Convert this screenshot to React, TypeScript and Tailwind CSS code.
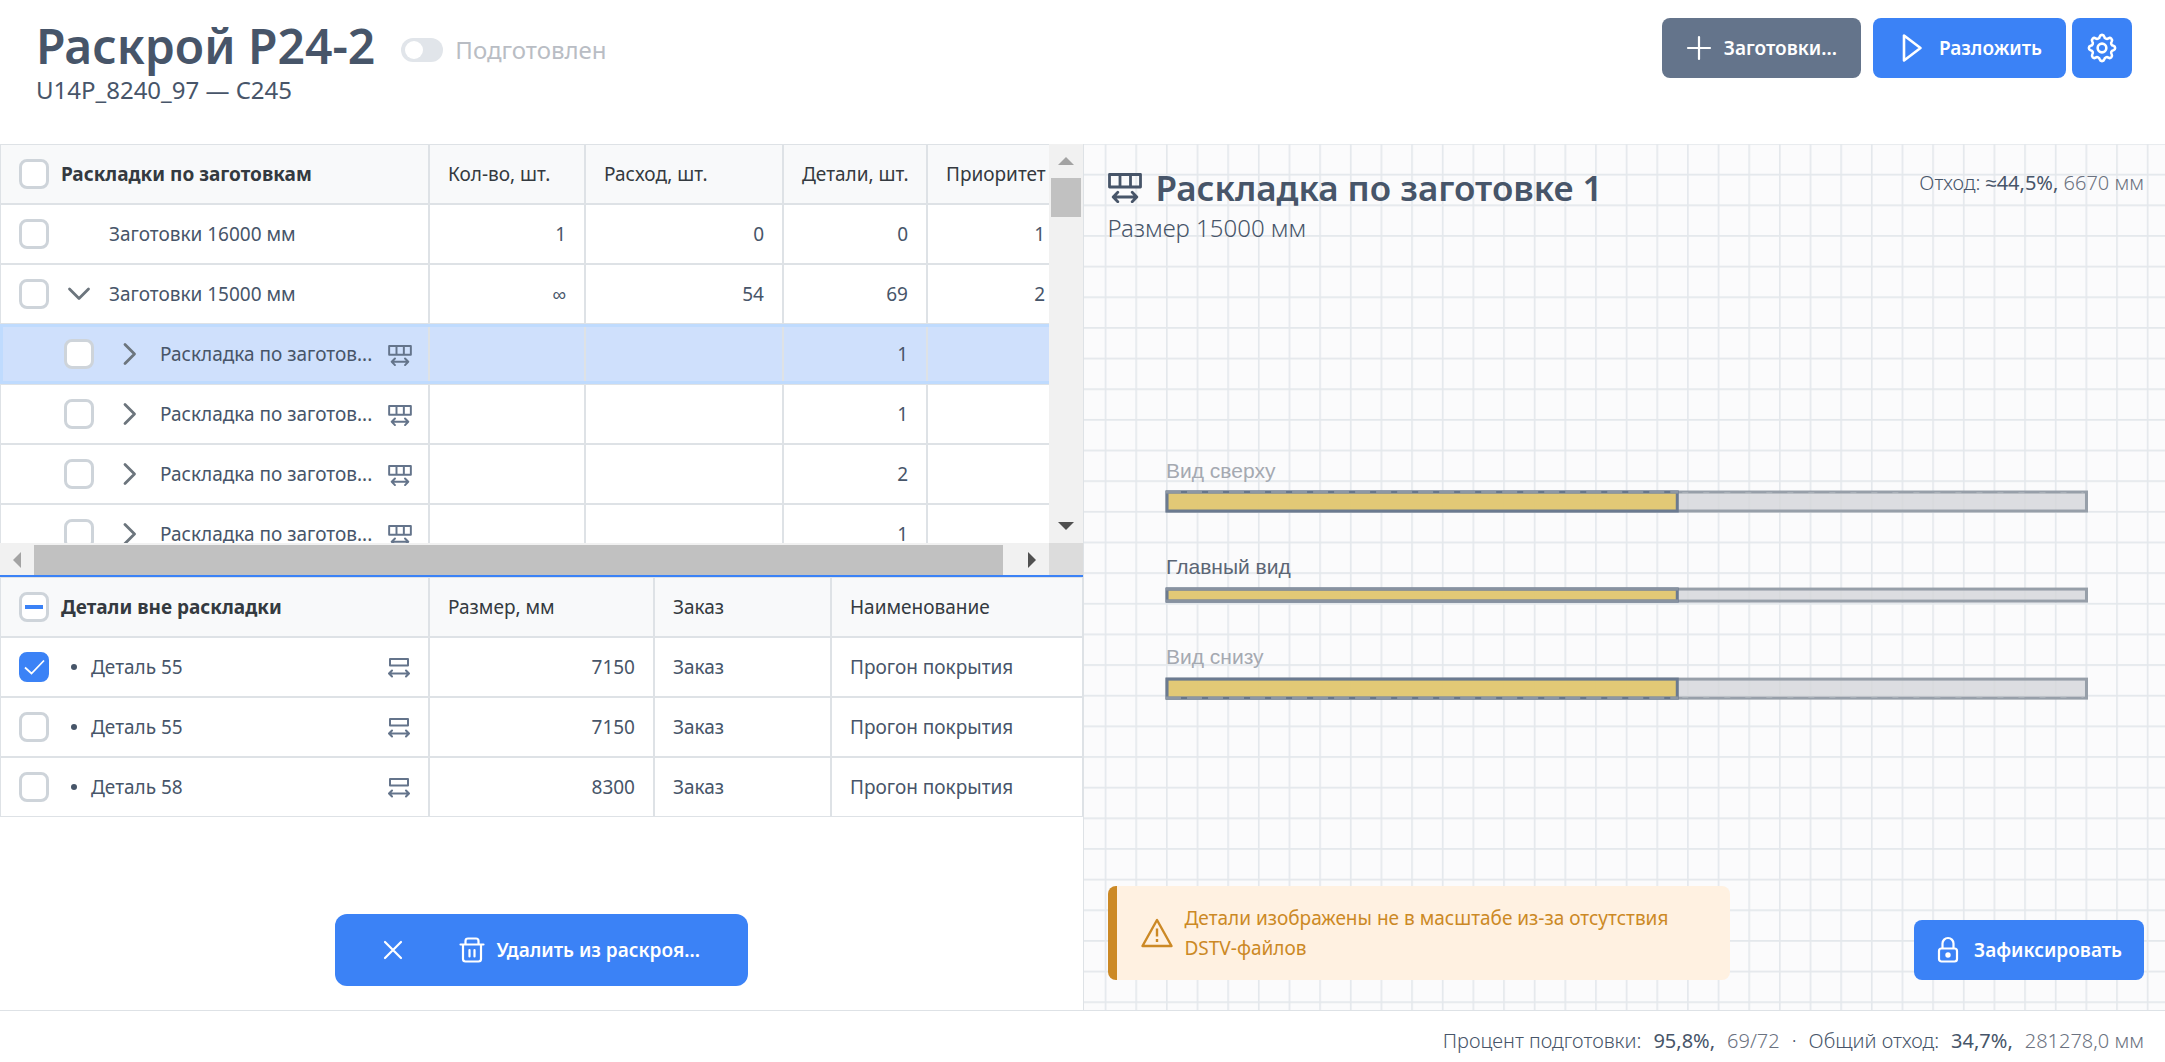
import { useState } from 'react';
import type { ReactNode } from 'react';
import clsx from 'clsx';

type StockRow = {
  id: string;
  name: string;
  child?: boolean;
  open?: boolean;
  selected?: boolean;
  count: string;
  usage: string;
  parts: string;
  priority: string;
};

const stockRows: StockRow[] = [
  { id: 's1', name: 'Заготовки 16000 мм', count: '1', usage: '0', parts: '0', priority: '1' },
  { id: 's2', name: 'Заготовки 15000 мм', open: true, count: '∞', usage: '54', parts: '69', priority: '2' },
  { id: 'l1', name: 'Раскладка по заготов...', child: true, selected: true, count: '', usage: '', parts: '1', priority: '' },
  { id: 'l2', name: 'Раскладка по заготов...', child: true, count: '', usage: '', parts: '1', priority: '' },
  { id: 'l3', name: 'Раскладка по заготов...', child: true, count: '', usage: '', parts: '2', priority: '' },
  { id: 'l4', name: 'Раскладка по заготов...', child: true, count: '', usage: '', parts: '1', priority: '' },
];

const partRows = [
  { id: 'p1', name: 'Деталь 55', size: '7150', order: 'Заказ', title: 'Прогон покрытия' },
  { id: 'p2', name: 'Деталь 55', size: '7150', order: 'Заказ', title: 'Прогон покрытия' },
  { id: 'p3', name: 'Деталь 58', size: '8300', order: 'Заказ', title: 'Прогон покрытия' },
];

const views = [
  { label: 'Вид сверху', baseline: 22, top: 36, height: 19, muted: true, dash: 'top' },
  { label: 'Главный вид', baseline: 118, top: 133, height: 12, muted: false, dash: 'none' },
  { label: 'Вид снизу', baseline: 208, top: 223, height: 19, muted: true, dash: 'bottom' },
];

// eight round teeth joined by shallow inward arcs
const gearPoint = (deg: number) => {
  const a = (deg * Math.PI) / 180;
  return `${(15 + 11.3 * Math.cos(a)).toFixed(2)} ${(15 + 11.3 * Math.sin(a)).toFixed(2)}`;
};
const gearPath =
  `M${gearPoint(-11.25)}` +
  Array.from({ length: 8 }, (_, i) => {
    const deg = i * 45;
    return `A2.3 2.3 0 0 1 ${gearPoint(deg + 11.25)}A2.5 2.5 0 0 0 ${gearPoint(deg + 33.75)}`;
  }).join('') +
  'Z';

function GearIcon({ className }: { className?: string }) {
  return (
    <svg viewBox="0.5 0.5 29 29" fill="none" stroke="currentColor" strokeWidth="2.500" strokeLinejoin="round" className={className} aria-hidden="true">
      <path d={gearPath} />
      <circle cx="15" cy="15" r="4.200" />
    </svg>
  );
}

function LayoutIcon({ className }: { className?: string }) {
  return (
    <svg viewBox="0 0 34 30" fill="none" stroke="currentColor" strokeWidth="2.800" strokeLinejoin="round" strokeLinecap="round" className={className} aria-hidden="true">
      <path d="M1.5 1.5h31v12.5h-31zM12 1.5V14M22.500 1.5V14" />
      <path d="M5.500 24h23M9.800 19.300L5.200 24l4.600 4.700M24.200 19.300l4.600 4.700-4.600 4.700" />
    </svg>
  );
}

function PartIcon({ className }: { className?: string }) {
  return (
    <svg viewBox="0 0 22 20" fill="none" stroke="currentColor" strokeWidth="2" strokeLinejoin="round" strokeLinecap="round" className={className} aria-hidden="true">
      <path d="M2 1h18v6.500H2z" />
      <path d="M1.500 15.500h19M4 12.500l-3 3 3 3M18 12.500l3 3-3 3" />
    </svg>
  );
}

function Check({
  label,
  checked,
  mixed,
  onChange,
}: {
  label: string;
  checked?: boolean;
  mixed?: boolean;
  onChange?: () => void;
}) {
  return (
    <label className="relative block h-[30px] w-[30px] shrink-0">
      <input
        type="checkbox"
        aria-label={label}
        checked={checked ?? false}
        onChange={onChange ?? (() => {})}
        className="block h-full w-full appearance-none rounded-lg border-3 border-[#ced4da] bg-white checked:border-[#3b82f6] checked:bg-[#3b82f6]"
      />
      {checked && (
        <svg viewBox="0 0 30 30" fill="none" stroke="white" strokeWidth="1.800" className="pointer-events-none absolute inset-0">
          <path d="M6 15.500l6.500 6L25 8.500" />
        </svg>
      )}
      {mixed && <span className="pointer-events-none absolute inset-x-1.5 top-[13px] h-1 bg-[#3b82f6]" />}
    </label>
  );
}

function HeadCell({ children, className }: { children: ReactNode; className?: string }) {
  return (
    <th className={clsx('h-[60px] border border-[#dee2e6] bg-[#f8f9fa] px-[18px] text-left font-normal text-[#343a40]', className)}>
      {children}
    </th>
  );
}

function Cell({ children, className }: { children?: ReactNode; className?: string }) {
  return <td className={clsx('h-[60px] border border-[#dee2e6] px-[18px]', className)}>{children}</td>;
}

function StockTable() {
  return (
    <table className="w-[1064px] table-fixed border-separate border-spacing-0">
      <colgroup>
        <col className="w-[429px]" />
        <col className="w-[156px]" />
        <col className="w-[198px]" />
        <col className="w-[144px]" />
        <col />
      </colgroup>
      <thead>
        <tr>
          <HeadCell>
            <div className="flex items-center gap-3">
              <Check label="Выбрать все раскладки" />
              <span className="font-bold">Раскладки по заготовкам</span>
            </div>
          </HeadCell>
          <HeadCell>Кол-во, шт.</HeadCell>
          <HeadCell>Расход, шт.</HeadCell>
          <HeadCell className="whitespace-nowrap">Детали, шт.</HeadCell>
          <HeadCell>Приоритет</HeadCell>
        </tr>
      </thead>
      <tbody>
        {stockRows.map((row) => (
          <tr key={row.id} className={clsx(row.selected && 'bg-[#cfe0fc] outline-3 -outline-offset-3 outline-[#bfdbfe]')}>
            <Cell className="pr-4">
              <div className={clsx('flex items-center', row.child && 'pl-[45px]')}>
                <Check label={row.name} />
                <span className={clsx('flex w-9 shrink-0 justify-center', row.child ? 'ml-[18px]' : 'ml-3')}>
                  {(row.child || row.open) && (
                    <button type="button" aria-label={row.open ? 'Свернуть' : 'Развернуть'} className="text-[#6c757d]">
                      <svg
                        viewBox="0 0 24 24"
                        fill="none"
                        stroke="currentColor"
                        strokeWidth="2.800"
                        strokeLinecap="round"
                        strokeLinejoin="round"
                        className={clsx('h-6 w-6', row.open && 'rotate-90')}
                      >
                        <path d="M7 2.500l9.500 9.500L7 21.500" />
                      </svg>
                    </button>
                  )}
                </span>
                <span className="ml-3 flex-1 whitespace-nowrap">{row.name}</span>
                {row.child && <LayoutIcon className="mt-0.5 h-[21px] w-6 shrink-0 text-[#64748b]" />}
              </div>
            </Cell>
            <Cell className="text-right">{row.count}</Cell>
            <Cell className="text-right">{row.usage}</Cell>
            <Cell className="text-right">{row.parts}</Cell>
            <Cell className="text-right">{row.priority}</Cell>
          </tr>
        ))}
      </tbody>
    </table>
  );
}

function PartsTable() {
  const [picked, setPicked] = useState<string[]>(['p1']);

  const toggle = (id: string) =>
    setPicked((prev) => (prev.includes(id) ? prev.filter((x) => x !== id) : [...prev, id]));

  return (
    <table className="w-full table-fixed border-separate border-spacing-0">
      <colgroup>
        <col className="w-[429px]" />
        <col className="w-[225px]" />
        <col className="w-[177px]" />
        <col />
      </colgroup>
      <thead>
        <tr>
          <HeadCell>
            <div className="flex items-center gap-3">
              <Check label="Выбрать все детали" mixed={picked.length > 0} />
              <span className="font-bold">Детали вне раскладки</span>
            </div>
          </HeadCell>
          <HeadCell>Размер, мм</HeadCell>
          <HeadCell>Заказ</HeadCell>
          <HeadCell>Наименование</HeadCell>
        </tr>
      </thead>
      <tbody>
        {partRows.map((row) => (
          <tr key={row.id}>
            <Cell>
              <div className="flex items-center">
                <Check label={row.name} checked={picked.includes(row.id)} onChange={() => toggle(row.id)} />
                <span className="ml-[22px] h-1.5 w-1.5 rounded-full bg-[#475569]" />
                <span className="ml-3.5 flex-1">{row.name}</span>
                <PartIcon className="mt-0.5 h-5 w-[22px] text-[#64748b]" />
              </div>
            </Cell>
            <Cell className="text-right">{row.size}</Cell>
            <Cell>{row.order}</Cell>
            <Cell>{row.title}</Cell>
          </tr>
        ))}
      </tbody>
    </table>
  );
}

function VerticalScroll() {
  return (
    <div className="flex w-[34px] shrink-0 flex-col items-center bg-[#f1f1f1]">
      <button type="button" aria-label="Вверх" className="flex h-[34px] w-full items-center justify-center text-[#a3a3a3]">
        <svg viewBox="0 0 16 8" className="h-2 w-4" fill="currentColor">
          <path d="M8 0l8 8H0z" />
        </svg>
      </button>
      <div className="h-[39px] w-[30px] bg-[#c1c1c1]" />
      <button type="button" aria-label="Вниз" className="mt-auto flex h-[34px] w-full items-center justify-center text-[#505050]">
        <svg viewBox="0 0 16 8" className="h-2 w-4" fill="currentColor">
          <path d="M0 0h16L8 8z" />
        </svg>
      </button>
    </div>
  );
}

function HorizontalScroll() {
  return (
    <div className="flex h-8 shrink-0">
      <div className="flex flex-1 bg-[#f1f1f1] pt-0.5">
        <button type="button" aria-label="Влево" className="flex w-[34px] items-center justify-center text-[#a3a3a3]">
          <svg viewBox="0 0 8 16" className="h-4 w-2" fill="currentColor">
            <path d="M8 0v16L0 8z" />
          </svg>
        </button>
        <div className="mr-3 flex-1 bg-[#c1c1c1]" />
        <button type="button" aria-label="Вправо" className="flex w-[34px] items-center justify-center text-[#505050]">
          <svg viewBox="0 0 8 16" className="h-4 w-2" fill="currentColor">
            <path d="M0 0l8 8-8 8z" />
          </svg>
        </button>
      </div>
      <div className="w-[34px] bg-[#dcdcdc]" />
    </div>
  );
}

function GridBackground() {
  return (
    <svg className="absolute inset-0 h-full w-full" aria-hidden="true">
      <defs>
        <pattern id="grid" x="20.700" y="-0.900" width="30.650" height="30.650" patternUnits="userSpaceOnUse">
          <path d="M0.800 0V30.650M0 0.800H30.650" stroke="#e4e8ec" strokeWidth="1.700" fill="none" />
        </pattern>
      </defs>
      <rect width="100%" height="100%" fill="url(#grid)" />
    </svg>
  );
}

function Drawing() {
  return (
    <svg viewBox="0 0 923 246" className="block h-auto w-full" role="img" aria-label="Виды раскладки">
      {views.map((view) => {
        const bottom = view.top + view.height;
        const dashY = view.dash === 'top' ? view.top : bottom;
        return (
          <g key={view.label}>
            <text
              x="1"
              y={view.baseline}
              fontSize="21"
              fontFamily="'Liberation Sans', Arial, sans-serif"
              fill={view.muted ? '#a5a9b1' : '#5c6675'}
            >
              {view.label}
            </text>
            <rect x="2" y={view.top} width="919" height={view.height} fill="#d4d6da" fillOpacity="0.8" stroke="#979fa9" strokeWidth="3" />
            <rect x="2" y={view.top} width="510" height={view.height} fill="#e2c76a" fillOpacity="0.9" stroke="#6b7a90" strokeWidth="3" />
            {view.dash === 'none' ? (
              <path d={`M1 ${view.top}H513M1 ${bottom}H513`} stroke="#8892a0" strokeWidth="3" />
            ) : (
              <>
                <path d={`M1 ${dashY}H513`} stroke="#8d97a3" strokeWidth="3" />
                <path d={`M16 ${dashY}H513`} stroke="#66758a" strokeWidth="2" strokeDasharray="6 15" />
                <path
                  d={`M517 ${dashY + (view.dash === 'top' ? 1 : -1)}H918`}
                  stroke="#bcc1c7"
                  strokeWidth="1"
                  strokeDasharray="6 15"
                />
              </>
            )}
          </g>
        );
      })}
    </svg>
  );
}

export default function App() {
  const [prepared, setPrepared] = useState(false);

  return (
    <div className="flex h-screen flex-col overflow-hidden bg-white font-['Noto_Sans',sans-serif] text-[19px] leading-7 text-[#475569]">
      <header className="flex h-36 shrink-0 items-start justify-between pt-[18px] pr-[33px] pl-9">
        <div>
          <div className="flex items-center gap-[26px]">
            <h1 className="text-5xl leading-[56px] font-semibold">Раскрой P24-2</h1>
            <label className="flex items-center gap-3 pt-2 text-2xl text-[#b9bdc4]">
              <input
                type="checkbox"
                role="switch"
                checked={prepared}
                onChange={() => setPrepared(!prepared)}
                className="flex h-6 w-[42px] appearance-none items-center rounded-full bg-[#e1e5ea] px-1 before:h-[18px] before:w-[18px] before:rounded-full before:bg-white checked:justify-end checked:bg-[#3b82f6]"
              />
              Подготовлен
            </label>
          </div>
          <p className="text-2xl leading-8">U14P_8240_97 — C245</p>
        </div>
        <div className="flex font-semibold text-white">
          <button type="button" className="flex h-[60px] items-center gap-3 rounded-lg bg-[#64748b] px-6">
            <svg viewBox="0 0 26 26" className="h-[26px] w-[26px]" fill="none" stroke="currentColor" strokeWidth="2.200" strokeLinecap="round">
              <path d="M13 2v22M2 13h22" />
            </svg>
            Заготовки...
          </button>
          <button type="button" className="ml-3 flex h-[60px] items-center gap-3 rounded-lg bg-[#3b82f6] px-6">
            <svg viewBox="0 0 30 30" className="h-[30px] w-[30px]" fill="none" stroke="currentColor" strokeWidth="2.600" strokeLinejoin="round">
              <path d="M7 2.500v25L23.500 15z" />
            </svg>
            Разложить
          </button>
          <button type="button" aria-label="Настройки" className="ml-1.5 flex h-[60px] w-[60px] items-center justify-center rounded-lg bg-[#3b82f6]">
            <GearIcon className="h-[30px] w-[30px]" />
          </button>
        </div>
      </header>

      <main className="flex min-h-0 flex-1">
        <section className="flex w-1/2 flex-col">
          <div className="flex h-1/2 flex-col border-b-2 border-[#3b82f6]">
            <div className="flex min-h-0 flex-1">
              <div className="min-w-0 flex-1 overflow-hidden">
                <StockTable />
              </div>
              <VerticalScroll />
            </div>
            <HorizontalScroll />
          </div>
          <div className="flex h-1/2 flex-col justify-between">
            <PartsTable />
            <div className="mb-6 flex h-[72px] items-center gap-3 self-center rounded-xl bg-[#3b82f6] px-7 font-semibold text-white">
              <button type="button" aria-label="Снять выделение" className="flex h-[60px] w-[60px] items-center justify-center">
                <svg viewBox="0 0 20 20" className="h-5 w-5" fill="none" stroke="currentColor" strokeWidth="2.200" strokeLinecap="round">
                  <path d="M2 2l16 16M18 2L2 18" />
                </svg>
              </button>
              <button type="button" className="flex h-[60px] items-center gap-3 pr-5 pl-6">
                <svg viewBox="0 0 26 26" className="h-[26px] w-[26px]" fill="none" stroke="currentColor" strokeWidth="2.200" strokeLinecap="round" strokeLinejoin="round">
                  <path d="M1.500 7.500h23M6.500 7V4q0-2.500 2.500-2.500h8q2.500 0 2.500 2.500v3M4 7.500V22q0 2.500 2.500 2.500h13q2.500 0 2.500-2.500V7.500M10.500 13v6.500M15.500 13v6.500" />
                </svg>
                Удалить из раскроя...
              </button>
            </div>
          </div>
        </section>

        <section className="relative w-1/2 border-l border-[#dee2e6] bg-[#fbfbfc]">
          <GridBackground />
          <div className="relative flex h-full flex-col justify-between pt-6 pr-[21px] pb-[30px] pl-6">
            <div className="flex items-start justify-between">
              <div>
                <h2 className="flex items-center gap-3.5 text-[35px] leading-10 font-semibold">
                  <LayoutIcon className="h-[30px] w-[34px]" />
                  Раскладка по заготовке 1
                </h2>
                <p className="text-2xl leading-10 font-light">Размер 15000 мм</p>
              </div>
              <p className="text-xl leading-[30px] font-light">
                Отход: <b>≈44,5%,</b> <span className="text-[#6b7280]">6670 мм</span>
              </p>
            </div>

            <div className="pt-6 pr-14 pl-[57px]">
              <Drawing />
            </div>

            <div className="flex items-end justify-between">
              <div className="flex w-[622px] items-center gap-3 rounded-lg border-l-9 border-[#cc8925] bg-[#fff1e1] px-6 py-[17px] text-[#cc8925]">
                <svg viewBox="0 0 32 30" className="h-[30px] w-8 shrink-0" fill="none" stroke="currentColor" strokeWidth="2.400" strokeLinejoin="round" aria-hidden="true">
                  <path d="M16 2L1.500 28h29z" />
                  <path d="M16 10.500v8M16 21v3" />
                </svg>
                <p className="leading-[30px]">Детали изображены не в масштабе из-за отсутствия DSTV-файлов</p>
              </div>
              <button type="button" className="flex h-[60px] items-center gap-3.5 rounded-lg bg-[#3b82f6] px-[22px] font-semibold text-white">
                <svg viewBox="0 0 24 28" className="h-7 w-6" fill="none" stroke="currentColor" strokeWidth="2.200" aria-hidden="true">
                  <rect x="3" y="12.500" width="18" height="13" rx="2.500" />
                  <path d="M6.500 12.500V7.500a5.500 5.500 0 0 1 11 0v5" />
                  <circle cx="12" cy="19" r="1.600" fill="currentColor" />
                </svg>
                Зафиксировать
              </button>
            </div>
          </div>
        </section>
      </main>

      <footer className="flex h-[52px] shrink-0 items-center justify-end gap-3 border-t border-[#dee2e6] pt-3 pr-[21px] pb-1 text-xl font-light">
        <span>Процент подготовки:</span>
        <b>95,8%,</b>
        <span className="text-[#6b7280]">69/72</span>
        <span>·</span>
        <span>Общий отход:</span>
        <b>34,7%,</b>
        <span className="text-[#6b7280]">281278,0 мм</span>
      </footer>
    </div>
  );
}
